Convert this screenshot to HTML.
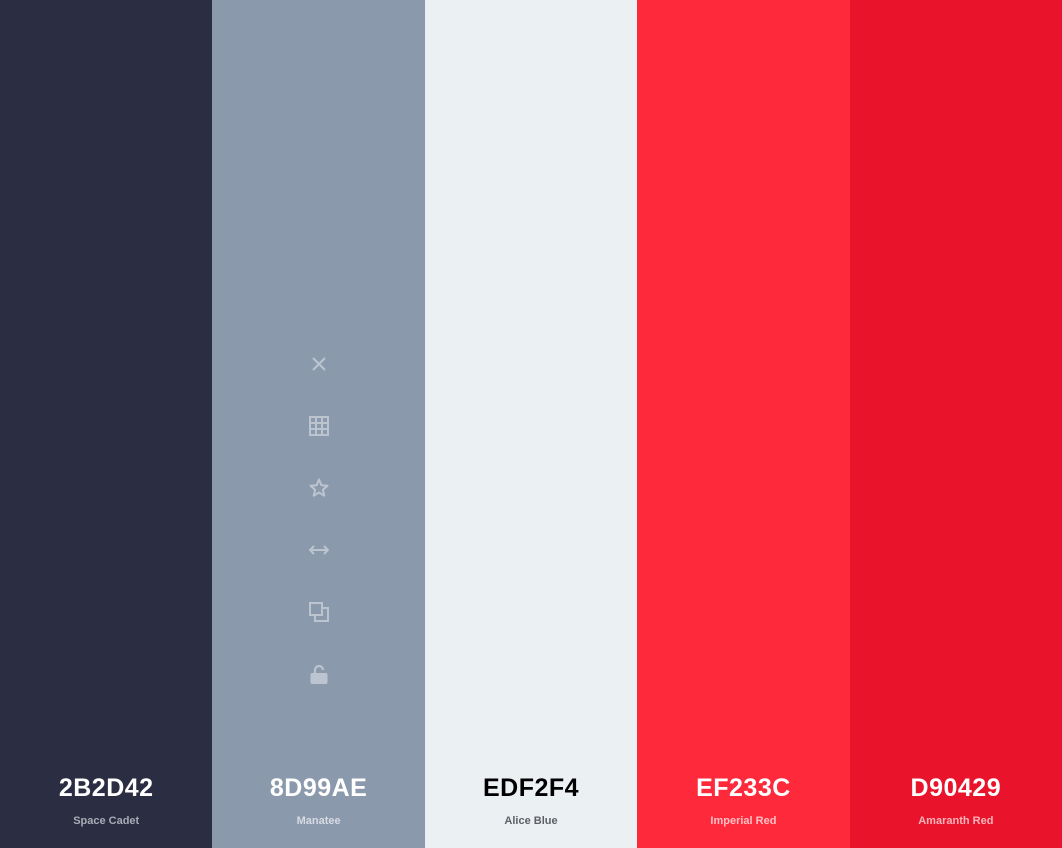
<!DOCTYPE html><html><head><style>
body{margin:0;width:1062px;height:848px;display:flex;font-family:"Liberation Sans",sans-serif;overflow:hidden}
.c{flex:1;position:relative;height:848px}
.h{position:absolute;top:774px;left:0;right:0;text-align:center;font-size:25px;font-weight:bold;letter-spacing:0.5px}
.n{position:absolute;top:815px;left:0;right:0;text-align:center;font-size:11px;font-weight:bold}
svg{position:absolute;left:50%;margin-left:-10px}
</style></head><body>
<div class="c" style="background:#2b2d42"><div class="h" style="color:#fff">2B2D42</div><div class="n" style="color:#a9abb5">Space Cadet</div></div>
<div class="c" style="background:#8b99ad">
<svg style="top:354px" width="20" height="20" viewBox="0 0 20 20" fill="none" stroke="#bcc4d0" stroke-width="2"><path d="M4 4L16 16M16 4L4 16"/></svg>
<svg style="top:416px" width="20" height="20" viewBox="0 0 20 20" fill="none" stroke="#bcc4d0" stroke-width="2"><rect x="1" y="1" width="18" height="18"/><path d="M7 1V19M13 1V19M1 7H19M1 13H19"/></svg>
<svg style="top:478px" width="20" height="20" viewBox="0 0 20 20" fill="none" stroke="#bcc4d0" stroke-width="2" stroke-linejoin="round"><path d="M10 1.5L12.4 7.2 18.5 7.7 13.9 11.7 15.3 17.7 10 14.5 4.7 17.7 6.1 11.7 1.5 7.7 7.6 7.2Z"/></svg>
<svg style="top:540px" width="20" height="20" viewBox="0 0 20 20" fill="none" stroke="#bcc4d0" stroke-width="2"><path d="M1 10H19M5 6L1 10 5 14M15 6L19 10 15 14"/></svg>
<svg style="top:602px" width="20" height="20" viewBox="0 0 20 20" fill="none" stroke="#bcc4d0" stroke-width="2"><rect x="1" y="1" width="12" height="12"/><path d="M13 6H19V19H6V13"/></svg>
<svg style="top:664px" width="20" height="20" viewBox="0 0 20 20" fill="#bcc4d0"><path d="M6 9V6a4 4 0 0 1 8 0" fill="none" stroke="#bcc4d0" stroke-width="2.2"/><rect x="1.5" y="9" width="17" height="11" rx="2"/></svg>
<div class="h" style="color:#fff">8D99AE</div><div class="n" style="color:#d6dbe3">Manatee</div></div>
<div class="c" style="background:#ebf0f3"><div class="h" style="color:#000">EDF2F4</div><div class="n" style="color:#5e6066">Alice Blue</div></div>
<div class="c" style="background:#fe2a3b"><div class="h" style="color:#fff">EF233C</div><div class="n" style="color:#ffc0c5">Imperial Red</div></div>
<div class="c" style="background:#e9142b"><div class="h" style="color:#fff">D90429</div><div class="n" style="color:#f8b5bc">Amaranth Red</div></div>
</body></html>
